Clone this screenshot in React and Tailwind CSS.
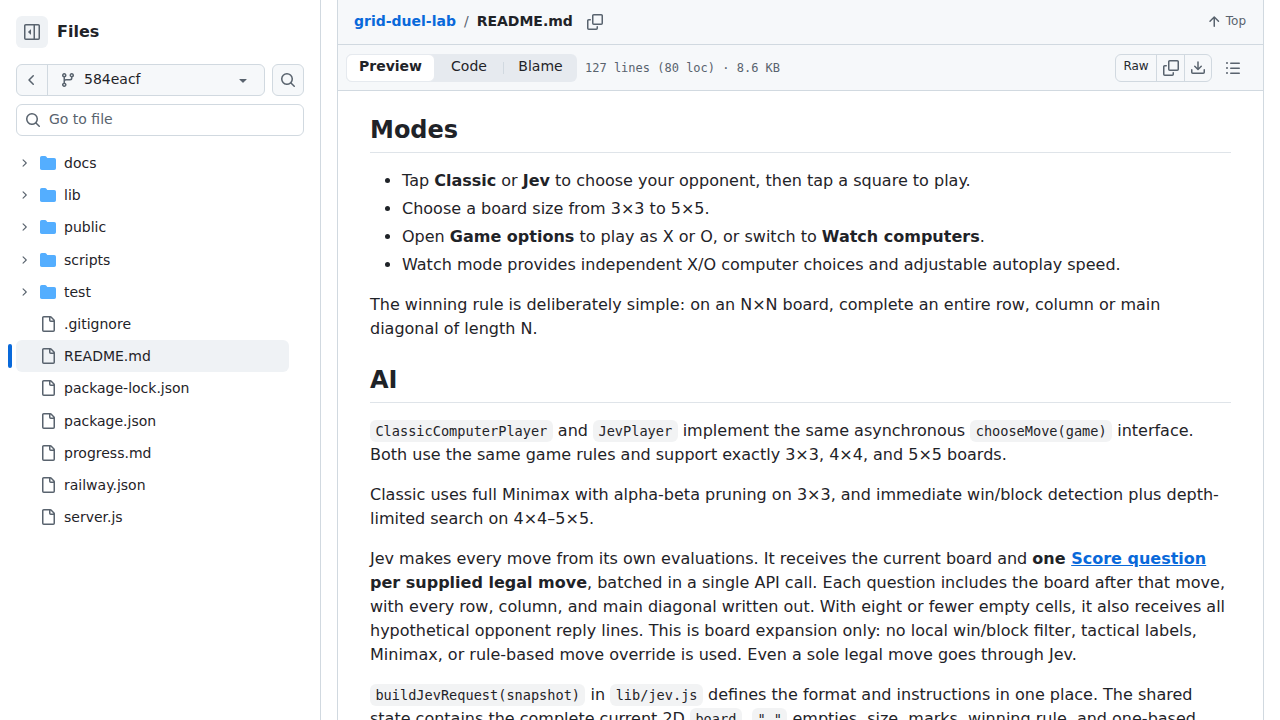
import React from 'react';

const Icon = ({ d, size = 16, className = '' }) => (
  <svg width={size} height={size} viewBox="0 0 16 16" fill="currentColor" className={`shrink-0 ${className}`}>
    {[].concat(d).map((p, i) => <path key={i} d={p} />)}
  </svg>
);

const icons = {
  sidebar: ['m4.177 7.823 2.396-2.396A.25.25 0 0 1 7 5.604v4.792a.25.25 0 0 1-.427.177L4.177 8.177a.25.25 0 0 1 0-.354Z', 'M0 1.75C0 .784.784 0 1.75 0h12.5C15.216 0 16 .784 16 1.75v12.5A1.75 1.75 0 0 1 14.25 16H1.75A1.75 1.75 0 0 1 0 14.25Zm1.75-.25a.25.25 0 0 0-.25.25v12.5c0 .138.112.25.25.25H9.5v-13Zm12.5 13a.25.25 0 0 0 .25-.25V1.75a.25.25 0 0 0-.25-.25H11v13Z'],
  branch: 'M9.5 3.25a2.25 2.25 0 1 1 3 2.122V6A2.5 2.5 0 0 1 10 8.5H6a1 1 0 0 0-1 1v1.128a2.251 2.251 0 1 1-1.5 0V5.372a2.25 2.25 0 1 1 1.5 0v1.836A2.493 2.493 0 0 1 6 7h4a1 1 0 0 0 1-1v-.628A2.25 2.25 0 0 1 9.5 3.25Zm-6 0a.75.75 0 1 0 1.5 0 .75.75 0 0 0-1.5 0Zm8.25-.75a.75.75 0 1 0 0 1.5.75.75 0 0 0 0-1.5ZM4.25 12a.75.75 0 1 0 0 1.5.75.75 0 0 0 0-1.5Z',
  search: 'M10.68 11.74a6 6 0 0 1-7.922-8.982 6 6 0 0 1 8.982 7.922l3.04 3.04a.749.749 0 0 1-.326 1.275.749.749 0 0 1-.734-.215ZM11.5 7a4.499 4.499 0 1 0-8.997 0A4.499 4.499 0 0 0 11.5 7Z',
  copy: ['M0 6.75C0 5.784.784 5 1.75 5h1.5a.75.75 0 0 1 0 1.5h-1.5a.25.25 0 0 0-.25.25v7.5c0 .138.112.25.25.25h7.5a.25.25 0 0 0 .25-.25v-1.5a.75.75 0 0 1 1.5 0v1.5A1.75 1.75 0 0 1 9.25 16h-7.5A1.75 1.75 0 0 1 0 14.25Z', 'M5 1.75C5 .784 5.784 0 6.75 0h7.5C15.216 0 16 .784 16 1.75v7.5A1.75 1.75 0 0 1 14.25 11h-7.5A1.75 1.75 0 0 1 5 9.25Zm1.75-.25a.25.25 0 0 0-.25.25v7.5c0 .138.112.25.25.25h7.5a.25.25 0 0 0 .25-.25v-7.5a.25.25 0 0 0-.25-.25Z'],
  download: ['M2.75 14A1.75 1.75 0 0 1 1 12.25v-2.5a.75.75 0 0 1 1.5 0v2.5c0 .138.112.25.25.25h10.5a.25.25 0 0 0 .25-.25v-2.5a.75.75 0 0 1 1.5 0v2.5A1.75 1.75 0 0 1 13.25 14Z', 'M7.25 7.689V2a.75.75 0 0 1 1.5 0v5.689l1.97-1.969a.749.749 0 1 1 1.06 1.06l-3.25 3.25a.749.749 0 0 1-1.06 0L4.22 6.78a.749.749 0 1 1 1.06-1.06l1.97 1.969Z'],
  list: 'M5.75 2.5h8.5a.75.75 0 0 1 0 1.5h-8.5a.75.75 0 0 1 0-1.5Zm0 5h8.5a.75.75 0 0 1 0 1.5h-8.5a.75.75 0 0 1 0-1.5Zm0 5h8.5a.75.75 0 0 1 0 1.5h-8.5a.75.75 0 0 1 0-1.5ZM2 14a1 1 0 1 1 0-2 1 1 0 0 1 0 2Zm1-6a1 1 0 1 1-2 0 1 1 0 0 1 2 0ZM2 4a1 1 0 1 1 0-2 1 1 0 0 1 0 2Z',
  arrowUp: 'M3.47 7.78a.75.75 0 0 1 0-1.06l4.25-4.25a.75.75 0 0 1 1.06 0l4.25 4.25a.751.751 0 0 1-.018 1.042.751.751 0 0 1-1.042.018L9 4.81v7.44a.75.75 0 0 1-1.5 0V4.81L4.53 7.78a.75.75 0 0 1-1.06 0Z',
  file: 'M2 1.75C2 .784 2.784 0 3.75 0h6.586c.464 0 .909.184 1.237.513l2.914 2.914c.329.328.513.773.513 1.237v9.586A1.75 1.75 0 0 1 13.25 16h-9.5A1.75 1.75 0 0 1 2 14.25Zm1.75-.25a.25.25 0 0 0-.25.25v12.5c0 .138.112.25.25.25h9.5a.25.25 0 0 0 .25-.25V6h-2.75A1.75 1.75 0 0 1 9 4.25V1.5Zm6.75.062V4.25c0 .138.112.25.25.25h2.688l-.011-.013-2.914-2.914-.013-.011Z',
  folder: 'M1.75 1A1.75 1.75 0 0 0 0 2.75v10.5C0 14.216.784 15 1.75 15h12.5A1.75 1.75 0 0 0 16 13.25v-8.5A1.75 1.75 0 0 0 14.25 3H7.5a.25.25 0 0 1-.2-.1l-.9-1.2C6.07 1.26 5.55 1 5 1H1.75Z',
  chevronRight: 'M6.22 3.22a.75.75 0 0 1 1.06 0l4.25 4.25a.75.75 0 0 1 0 1.06l-4.25 4.25a.751.751 0 0 1-1.042-.018.751.751 0 0 1-.018-1.042L9.94 8 6.22 4.28a.75.75 0 0 1 0-1.06Z',
  chevronLeft: 'M9.78 12.78a.75.75 0 0 1-1.06 0L4.47 8.53a.75.75 0 0 1 0-1.06l4.25-4.25a.751.751 0 0 1 1.042.018.751.751 0 0 1 .018 1.042L6.06 8l3.72 3.72a.75.75 0 0 1 0 1.06Z',
  triangleDown: 'm4.427 7.427 3.396 3.396a.25.25 0 0 0 .354 0l3.396-3.396A.25.25 0 0 0 11.396 7H4.604a.25.25 0 0 0-.177.427Z',
};

const folders = ['docs', 'lib', 'public', 'scripts', 'test'];
const files = ['.gitignore', 'README.md', 'package-lock.json', 'package.json', 'progress.md', 'railway.json', 'server.js'];

const Code = ({ children }) => (
  <code className="bg-[#818b981a] rounded-md px-[5.44px] py-[2.7px] text-[13.6px] font-['DejaVu_Sans_Mono',monospace]">{children}</code>
);

const Sidebar = () => (
  <aside className="w-[321px] shrink-0 h-full border-r border-[#d1d9e0] px-4 pt-4">
    <div className="flex items-center gap-[9px] h-8">
      <div className="w-8 h-8 rounded-md bg-[#eff2f5] flex items-center justify-center text-[#59636e]">
        <Icon d={icons.sidebar} />
      </div>
      <span className="font-bold text-base">Files</span>
    </div>

    <div className="flex gap-[7px] mt-4">
      <div className="flex flex-1 h-8 rounded-md border border-[#d1d9e0] bg-[#f6f8fa] text-sm">
        <div className="w-[31px] flex items-center justify-center border-r border-[#d1d9e0] text-[#59636e]">
          <Icon d={icons.chevronLeft} />
        </div>
        <div className="flex flex-1 items-center pl-3 pr-[13px]">
          <Icon d={icons.branch} className="text-[#59636e]" />
          <span className="ml-2 flex-1 pb-[2px]">584eacf</span>
          <Icon d={icons.triangleDown} className="text-[#59636e]" />
        </div>
      </div>
      <div className="w-8 h-8 rounded-md border border-[#d1d9e0] bg-[#f6f8fa] flex items-center justify-center text-[#59636e]">
        <Icon d={icons.search} />
      </div>
    </div>

    <div className="flex items-center gap-2 h-8 mt-2 px-2 rounded-md border border-[#d1d9e0] text-sm text-[#59636e]">
      <Icon d={icons.search} />
      <span className="pb-[2px]">Go to file</span>
    </div>

    <ul className="mt-[11px] text-sm">
      {folders.map((name) => (
        <li key={name} className="flex items-center h-[32.2px]">
          <Icon d={icons.chevronRight} size={12} className="text-[#59636e] ml-[2px]" />
          <Icon d={icons.folder} className="text-[#54aeff] ml-[10px]" />
          <span className="ml-2">{name}</span>
        </li>
      ))}
      {files.map((name) => (
        <li key={name} className={`relative flex items-center h-[32.2px] pl-6 w-[273px] rounded-md ${name === 'README.md' ? 'bg-[#eff2f5]' : ''}`}>
          {name === 'README.md' && <span className="absolute -left-2 top-[4px] w-1 h-6 rounded-md bg-[#0969da]" />}
          <Icon d={icons.file} className="text-[#59636e]" />
          <span className="ml-2">{name}</span>
        </li>
      ))}
    </ul>
  </aside>
);

const Toolbar = () => (
  <>
    <div className="flex items-center h-[45px] pl-4 pr-[17px] bg-[#f6f8fa] border-b border-[#d1d9e0] text-sm">
      <a className="font-semibold text-[#0969da] pb-[2px]">grid-duel-lab</a>
      <span className="mx-2 text-[#59636e] pb-[2px]">/</span>
      <span className="font-semibold pb-[2px]">README.md</span>
      <Icon d={icons.copy} className="ml-[14px] text-[#59636e]" />
      <div className="ml-auto flex items-center gap-1 text-xs text-[#59636e]">
        <Icon d={icons.arrowUp} />
        <span className="pb-[2px]">Top</span>
      </div>
    </div>
    <div className="flex items-center h-[46px] pl-2 pr-[22px] bg-[#f6f8fa] border-b border-[#d1d9e0]">
      <div className="flex h-7 rounded-md bg-[#e6eaef] text-sm">
        <div className="flex items-center justify-center w-[89px] pb-[3px] rounded-md bg-white border border-[#e6eaef] font-semibold">Preview</div>
        <div className="flex items-center justify-center w-[68px] pb-[3px]">Code</div>
        <div className="my-2 w-px bg-[#d1d9e0]" />
        <div className="flex items-center justify-center w-[73px] pb-[3px]">Blame</div>
      </div>
      <span className="ml-2 text-xs text-[#59636e] font-['DejaVu_Sans_Mono',monospace]">127 lines (80 loc) · 8.6 KB</span>
      <div className="ml-auto flex h-7 rounded-md border border-[#d1d9e0] text-[#59636e]">
        <div className="flex items-center justify-center w-[41px] pb-[3px] text-xs text-[#25292e] border-r border-[#d1d9e0]">Raw</div>
        <div className="flex items-center justify-center w-[28px] border-r border-[#d1d9e0]"><Icon d={icons.copy} /></div>
        <div className="flex items-center justify-center w-[26px]"><Icon d={icons.download} /></div>
      </div>
      <Icon d={icons.list} className="ml-[13px] text-[#59636e]" />
    </div>
  </>
);

const Readme = () => (
  <article className="px-8 pt-6 text-base leading-6">
    <h2 className="text-2xl font-bold leading-[30px] pb-[7px] border-b border-[#d1d9e0b3] mb-4">Modes</h2>
    <ul className="list-disc pl-8 space-y-1 mb-4">
      <li>Tap <strong>Classic</strong> or <strong>Jev</strong> to choose your opponent, then tap a square to play.</li>
      <li>Choose a board size from 3×3 to 5×5.</li>
      <li>Open <strong>Game options</strong> to play as X or O, or switch to <strong>Watch computers</strong>.</li>
      <li>Watch mode provides independent X/O computer choices and adjustable autoplay speed.</li>
    </ul>
    <p className="mb-4">The winning rule is deliberately simple: on an N×N board, complete an entire row, column or main diagonal of length N.</p>

    <h2 className="text-2xl font-bold leading-[30px] pb-[7px] border-b border-[#d1d9e0b3] mt-6 mb-4">AI</h2>
    <p className="mb-4"><Code>ClassicComputerPlayer</Code> and <Code>JevPlayer</Code> implement the same asynchronous <Code>chooseMove(game)</Code> interface. Both use the same game rules and support exactly 3×3, 4×4, and 5×5 boards.</p>
    <p className="mb-4">Classic uses full Minimax with alpha-beta pruning on 3×3, and immediate win/block detection plus depth-limited search on 4×4–5×5.</p>
    <p className="mb-4">Jev makes every move from its own evaluations. It receives the current board and <strong>one <a className="text-[#0969da] underline">Score question</a> per supplied legal move</strong>, batched in a single API call. Each question includes the board after that move, with every row, column, and main diagonal written out. With eight or fewer empty cells, it also receives all hypothetical opponent reply lines. This is board expansion only: no local win/block filter, tactical labels, Minimax, or rule-based move override is used. Even a sole legal move goes through Jev.</p>
    <p className="mb-4"><Code>buildJevRequest(snapshot)</Code> in <Code>lib/jev.js</Code> defines the format and instructions in one place. The shared state contains the complete current 2D <Code>board</Code>, <Code>" "</Code> empties, size, marks, winning rule, and one-based</p>
  </article>
);

export default function App() {
  return (
    <div className="flex h-screen overflow-hidden bg-white text-[#1f2328] font-['DejaVu_Sans',sans-serif]">
      <Sidebar />
      <main className="flex-1 min-w-0 pl-4 pr-4">
        <div className="h-full border-x border-[#d1d9e0] overflow-hidden">
          <Toolbar />
          <Readme />
        </div>
      </main>
    </div>
  );
}
